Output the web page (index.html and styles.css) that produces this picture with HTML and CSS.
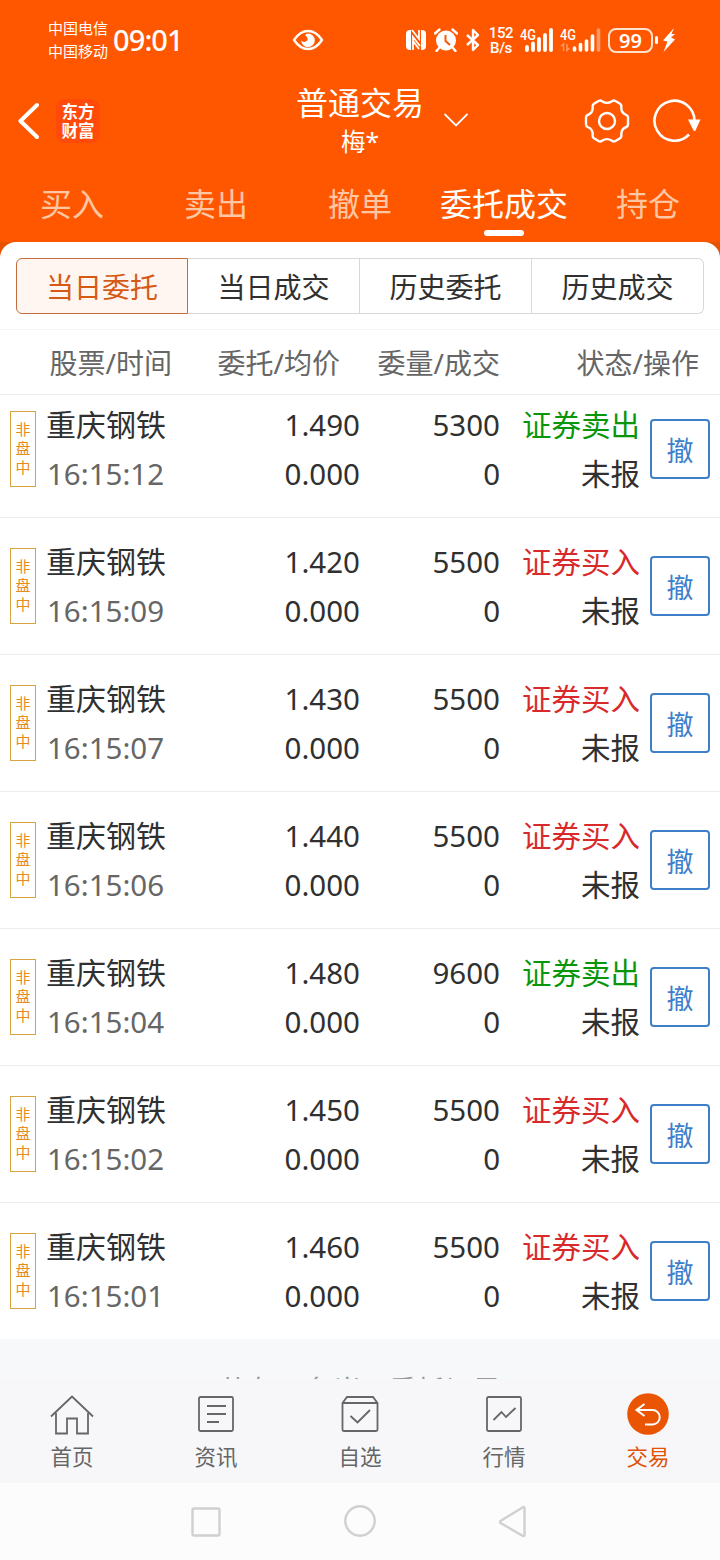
FILE: index.html
```html
<!DOCTYPE html>
<html lang="zh-CN">
<head>
  <meta charset="UTF-8" />
  <meta name="viewport" content="width=device-width, initial-scale=1.0" />
  <title>普通交易</title>
  <link rel="stylesheet" href="styles.css">
</head>
<body>

  <header class="top">
    <div class="status-bar">
      <div class="carriers"><span>中国电信</span><span>中国移动</span></div>
      <span class="clock">09:01</span>
      <svg class="eye" width="32" height="22" viewBox="0 0 32 22">
        <path d="M2 11Q8 2 16 2T30 11Q24 20 16 20T2 11Z" fill="none" stroke="#fff" stroke-width="2.4" stroke-linejoin="round"/>
        <path d="M16 4.500A6.800 6.800 0 1 1 9.200 11.500Q11.500 14 14.500 12T13.200 6Q14 4.700 16 4.500Z" fill="#fff"/>
      </svg>
      <svg class="nfc" width="22" height="22" viewBox="0 0 22 22">
        <path d="M5 1Q1 1 1 5V17Q1 21 5 21H6V1Z" fill="#fff"/>
        <path d="M17 21Q21 21 21 17V5Q21 1 17 1H16V21Z" fill="#fff"/>
        <path d="M8 21V8L15 17M7 1L14 10V1M8 12L14 20" fill="none" stroke="#fff" stroke-width="1.8"/>
      </svg>
      <svg class="alarm" width="24" height="24" viewBox="0 0 24 24">
        <circle cx="12" cy="12.5" r="10" fill="#fff"/>
        <path d="M1 5.5L5.5 1.5M18.5 1.5L23 5.5M5 20L2.5 23M19 20L21.5 23" stroke="#fff" stroke-width="2.4" stroke-linecap="round"/>
        <path d="M11.5 7V13L16 17" fill="none" stroke="#ff5700" stroke-width="2"/>
      </svg>
      <svg class="bluetooth" width="14" height="24" viewBox="0 0 14 24">
        <path d="M1 7L12 17L7 22V2L12 7L1 17" fill="none" stroke="#fff" stroke-width="2.4" stroke-linejoin="round"/>
      </svg>
      <div class="speed"><span>152</span><span>B/s</span></div>
      <svg class="signal" width="34" height="26" viewBox="0 0 34 26">
        <text x="0" y="12.5" class="net" textLength="16" lengthAdjust="spacingAndGlyphs">4G</text>
        <path d="M7 23V20M13 23V16.5M19 23V12M25 23V8M31 23V3" stroke="#fff" stroke-width="3.8" stroke-linecap="round"/>
      </svg>
      <svg class="signal" width="42" height="26" viewBox="0 0 42 26">
        <text x="0" y="12.5" class="net" textLength="16" lengthAdjust="spacingAndGlyphs">4G</text>
        <path d="M14.5 23V21M20.5 23V17.5M26.5 23V14M32.5 23V9" stroke="#fff" stroke-width="3.6" stroke-linecap="round"/>
        <path d="M38.500 23V3" stroke="#ff9a66" stroke-width="3.6" stroke-linecap="round"/>
        <path d="M1 19L3.500 17V24M9.500 21L7 23.500V17" fill="none" stroke="#ff9a66" stroke-width="1.5"/>
      </svg>
      <div class="battery">99</div>
      <span class="battery-cap"></span>
      <svg class="bolt" width="12" height="26" viewBox="0 0 12 26">
        <path d="M11 1L0 13.500L4.500 14.500L.5 25L12 12.500L8 10.500L12 7L8.500 7Z" fill="#fff"/>
      </svg>
    </div>

    <div class="title-bar">
      <div class="title-left">
        <svg width="22" height="38" viewBox="0 0 22 38">
          <path d="M20 3L3.500 19L20 35" fill="none" stroke="#fff" stroke-width="4" stroke-linecap="round" stroke-linejoin="round"/>
        </svg>
        <div class="logo"><span>东方</span><span>财富</span></div>
      </div>
      <div class="title">
        <h1>普通交易</h1>
        <p>梅*</p>
      </div>
      <div class="title-right">
        <svg class="chevron" width="24" height="14" viewBox="0 0 24 14">
          <path d="M.5 1L12 12.500L23.500 1" fill="none" stroke="#fff" stroke-width="1.8"/>
        </svg>
        <svg class="gear" width="46" height="44" viewBox="0 0 46 44">
          <path d="M14.500 2Q16.500 1 18 2.200Q23 5.500 28 2.200Q29.500 1 31.500 2L36 4.700Q37.700 6 37.300 8Q37 14 42.300 16Q44 16.600 44 18.500V25.500Q44 27.400 42.300 28Q37 30 37.300 36Q37.700 38 36 39.300L31.500 42Q29.500 43 28 41.800Q23 38.500 18 41.800Q16.500 43 14.500 42L10 39.300Q8.300 38 8.700 36Q9 30 3.700 28Q2 27.400 2 25.500V18.500Q2 16.600 3.700 16Q9 14 8.700 8Q8.300 6 10 4.700Z" fill="none" stroke="#fff" stroke-width="2.4"/>
          <circle cx="23" cy="22" r="8" fill="none" stroke="#fff" stroke-width="2.4"/>
        </svg>
        <svg class="refresh" width="48" height="44" viewBox="0 0 48 44">
          <path d="M41.500 22A20 20 0 1 0 36 35.500" fill="none" stroke="#fff" stroke-width="2.6"/>
          <path d="M35 20.500H47.500L42.500 31.500Q41.500 32.500 40.500 31.500Z" fill="#fff"/>
        </svg>
      </div>
    </div>

    <nav class="tabs">
      <a>买入</a>
      <a>卖出</a>
      <a>撤单</a>
      <a class="active">委托成交</a>
      <a>持仓</a>
    </nav>
  </header>

  <main>
    <div class="sheet">
      <div class="segments">
        <button class="active">当日委托</button>
        <button>当日成交</button>
        <button>历史委托</button>
        <button>历史成交</button>
      </div>
    </div>
    <div class="columns">
      <span>股票/时间</span>
      <span>委托/均价</span>
      <span>委量/成交</span>
      <span>状态/操作</span>
    </div>
    <div class="list" id="list"></div>
    <div class="summary">共有 7 条当日委托记录</div>
  </main>

  <nav class="bottom-nav">
    <a>
      <svg width="44" height="44" viewBox="0 0 44 44">
        <path d="M1 23.500L22 3.500L43 23.500M6 20V40.500H17V25.500H27V40.500H38V20"/>
      </svg>
      <span>首页</span>
    </a>
    <a>
      <svg width="44" height="44" viewBox="0 0 44 44">
        <rect x="5" y="4" width="34" height="34" rx="1.5"/>
        <path d="M13 13H32M13 21H32M13 29H25"/>
      </svg>
      <span>资讯</span>
    </a>
    <a>
      <svg width="44" height="44" viewBox="0 0 44 44">
        <path d="M4.500 10L9 4H35L39.500 10V36.500Q39.500 38 38 38H6Q4.500 38 4.500 36.500ZM4.500 10H39.500M12.500 23L19.500 29.500L32 17"/>
      </svg>
      <span>自选</span>
    </a>
    <a>
      <svg width="44" height="44" viewBox="0 0 44 44">
        <rect x="5" y="4" width="34" height="34" rx="1.5"/>
        <path d="M11.500 27L19.500 19L24 24L33.500 15"/>
      </svg>
      <span>行情</span>
    </a>
    <a class="active">
      <svg width="44" height="44" viewBox="0 0 44 44">
        <circle cx="22" cy="21" r="20.8"/>
        <path d="M18.500 11L10.500 17L18.500 23M11 17H26.500A7 7 0 0 1 26.500 31.500H19"/>
      </svg>
      <span>交易</span>
    </a>
  </nav>

  <div class="system-nav">
    <svg width="30" height="32" viewBox="0 0 30 32"><rect x="1.500" y="3.500" width="27" height="27" rx="1.5"/></svg>
    <svg width="32" height="32" viewBox="0 0 32 32"><circle cx="16" cy="16" r="14.7"/></svg>
    <svg width="28" height="32" viewBox="0 0 28 32"><path d="M24 2.300Q25.500 1.500 25.500 3V30Q25.500 31.500 24 31L1.500 18Q0 17 1.500 16Z"/></svg>
  </div>

  <script>
    const orders = [
      ["16:15:12", "1.490", 5300, "sell"],
      ["16:15:09", "1.420", 5500, "buy"],
      ["16:15:07", "1.430", 5500, "buy"],
      ["16:15:06", "1.440", 5500, "buy"],
      ["16:15:04", "1.480", 9600, "sell"],
      ["16:15:02", "1.450", 5500, "buy"],
      ["16:15:01", "1.460", 5500, "buy"]
    ];

    document.getElementById("list").innerHTML = orders.map(([time, price, qty, side]) => `
      <div class="order">
        <div class="badge"><span>非</span><span>盘</span><span>中</span></div>
        <div class="cell stock"><span class="name">重庆钢铁</span><span class="time">${time}</span></div>
        <div class="cell"><span>${price}</span><span>0.000</span></div>
        <div class="cell"><span>${qty}</span><span>0</span></div>
        <div class="cell"><span class="${side}">${side === "buy" ? "证券买入" : "证券卖出"}</span><span>未报</span></div>
        <button class="cancel">撤</button>
      </div>`).join("");
  </script>

</body>
</html>
```
FILE: styles.css
```css
* {
  box-sizing: border-box;
}

body {
  margin: 0;
  width: 720px;
  height: 1560px;
  overflow: hidden;
  display: flex;
  flex-direction: column;
  background: #fff;
  color: #303030;
  font-family: "Noto Sans", "Noto Sans CJK SC", sans-serif;
}

svg {
  display: block;
  flex: none;
}

button {
  font-family: inherit;
  padding: 0;
}

.top {
  height: 242px;
  background: #ff5700;
  color: #fff;
}

/* phone status bar */
.status-bar {
  height: 80px;
  display: flex;
  align-items: center;
  padding-left: 48px;
}

.carriers {
  display: flex;
  flex-direction: column;
  width: 60px;
  font-size: 15px;
  line-height: 23px;
  white-space: nowrap;
}

.clock {
  width: 70px;
  margin-left: 5px;
  font-size: 29px;
  font-weight: 500;
  line-height: 80px;
  letter-spacing: -0.9px;
}

.eye {
  margin-left: 109px;
}

.nfc {
  margin-left: 81px;
}

.alarm {
  margin-left: 7px;
}

.bluetooth {
  margin-left: 8px;
}

.speed {
  display: flex;
  flex-direction: column;
  width: 26px;
  margin-left: 8px;
  padding-top: 1px;
  font: 500 15px/14.5px Roboto, sans-serif;
  letter-spacing: -0.4px;
  text-align: center;
}

.signal {
  margin-left: 6px;
}

.net {
  font: 500 15px Roboto, sans-serif;
  fill: #fff;
}

.battery {
  width: 45px;
  height: 25px;
  margin-left: 6px;
  border: 2px solid #ffe2cc;
  border-radius: 8px;
  font-size: 20px;
  font-weight: 600;
  line-height: 21px;
  text-align: center;
}

.battery-cap {
  width: 3px;
  height: 8px;
  margin-left: 2px;
  border-radius: 2px;
  background: #fff;
}

.bolt {
  margin-left: 5px;
}

/* title row */
.title-bar {
  height: 85px;
  display: grid;
  grid-template-columns: 1fr 128px 1fr;
}

.title-left,
.title-right {
  display: flex;
  align-items: center;
  height: 82px;
}

.title-right {
  height: 81px;
}

.title-left {
  padding-left: 17px;
}

.logo {
  display: flex;
  flex-direction: column;
  align-items: center;
  justify-content: center;
  width: 44px;
  height: 44px;
  margin-left: 17px;
  border-radius: 9px;
  background: #ff4a0a;
  font-size: 16.5px;
  font-weight: 700;
  line-height: 19px;
}

.title {
  text-align: center;
}

.title h1 {
  margin: 0;
  padding-top: 2px;
  font-size: 32px;
  font-weight: 400;
  line-height: 42px;
}

.title p {
  margin: 0;
  font-size: 24.5px;
  line-height: 36px;
}

.chevron {
  margin: 0 0 2px 20px;
}

.gear {
  margin-left: 116px;
}

.refresh {
  margin-left: 23px;
}

.tabs {
  display: grid;
  grid-template-columns: repeat(5, 144px);
  height: 77px;
}

.tabs a {
  display: flex;
  flex-direction: column;
  align-items: center;
  padding-top: 19px;
  font-size: 32px;
  line-height: 40px;
  color: #ffc6a3;
}

.tabs .active {
  color: #fff;
}

.tabs .active::after {
  content: "";
  width: 40px;
  height: 6px;
  margin-top: 6px;
  border-radius: 3px;
  background: #fff;
}

/* order list */
main {
  height: 1137px;
  overflow: hidden;
  background: linear-gradient(#e65200 20px, #f7f8fa 20px);
}

.sheet {
  height: 87px;
  padding: 16px 16px 0;
  border-radius: 16px 16px 0 0;
  background: #fff;
}

.segments {
  display: grid;
  grid-template-columns: repeat(4, 172px);
  height: 56px;
}

.segments button {
  border: 1px solid #d8d8d8;
  border-left-width: 0;
  background: #fff;
  color: #303030;
  font-size: 28px;
}

.segments .active {
  border: 1px solid #c36d3c;
  border-radius: 6px 0 0 6px;
  background: #fff6f2;
  color: #d65a14;
}

.segments button:last-child {
  border-radius: 0 6px 6px 0;
}

.columns {
  display: grid;
  grid-template-columns: 172px 168px 160px 199px;
  height: 66px;
  border-top: 1px solid #f4f4f4;
  border-bottom: 1px solid #ececec;
  background: #fff;
  color: #666;
  font-size: 28px;
  line-height: 66px;
  text-align: right;
}

.list {
  height: 944px;
  display: flex;
  flex-direction: column;
  justify-content: flex-end;
  overflow: hidden;
  background: #fff;
}

.order {
  flex: none;
  height: 137px;
  display: grid;
  grid-template-columns: 26px 130px 194px 140px 140px 60px;
  padding: 0 10px;
  border-top: 1px solid #ececec;
}

.badge {
  display: flex;
  flex-direction: column;
  align-items: center;
  height: 76px;
  margin-top: 30px;
  padding-top: 8px;
  border: 1px solid #d9a341;
  color: #e88b1a;
  font-size: 15px;
  line-height: 19px;
}

.cell {
  display: flex;
  flex-direction: column;
  padding-top: 19px;
  font-size: 29.5px;
  line-height: 49px;
  text-align: right;
}

.stock {
  padding-left: 11px;
  text-align: left;
}

.name {
  margin-left: -1px;
  font-size: 30px;
  white-space: nowrap;
}

.time {
  color: #666;
}

.sell {
  color: #0a960a;
}

.buy {
  color: #d82a2a;
}

.cancel {
  width: 60px;
  height: 60px;
  margin: 38px 0 0 10px;
  border: 2px solid #3f7fca;
  border-radius: 4px;
  background: #fff;
  color: #3f7fca;
  font-size: 27px;
}

.summary {
  padding-top: 31px;
  color: #999;
  font-size: 28px;
  line-height: 40px;
  text-align: center;
}

.bottom-nav {
  display: grid;
  grid-template-columns: repeat(5, 144px);
  height: 104px;
  background: #f7f7fa;
}

.bottom-nav a {
  display: flex;
  flex-direction: column;
  align-items: center;
  padding-top: 14px;
  color: #666;
  font-size: 21.5px;
  line-height: 39px;
}

.bottom-nav svg {
  fill: none;
  stroke: #666;
  stroke-width: 1.8;
}

.bottom-nav .active {
  color: #e05206;
}

.bottom-nav .active svg {
  stroke: #fff;
  stroke-width: 2;
}

.bottom-nav circle {
  fill: #ea5504;
  stroke: none;
}

.system-nav {
  flex: 1;
  display: flex;
  padding: 22px 0 0 191px;
  background: #fcfcfc;
}

.system-nav svg {
  fill: none;
  stroke: #d0d0d0;
  stroke-width: 2.4;
}

.system-nav svg + svg {
  margin-left: 123px;
}
```
